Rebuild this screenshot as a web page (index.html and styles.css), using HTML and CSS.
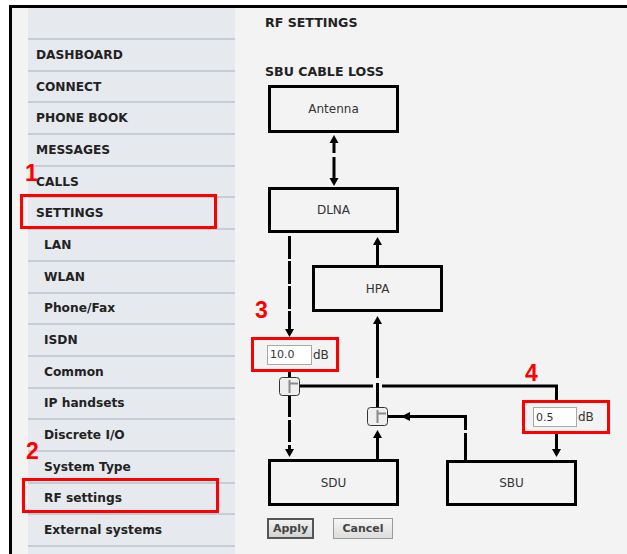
FILE: index.html
```html
<!DOCTYPE html>
<html>
    <head>
        <link rel="stylesheet" href="styles.css">
    </head>
    <body>
        <div class="frame">
            <div class="gutter"></div>
            <nav class="menu">
                <div class="menu-top"></div>
                <div class="item">DASHBOARD</div>
                <div class="item">CONNECT</div>
                <div class="item">PHONE BOOK</div>
                <div class="item">MESSAGES</div>
                <div class="item">CALLS</div>
                <div class="item">SETTINGS</div>
                <div class="item sub">LAN</div>
                <div class="item sub">WLAN</div>
                <div class="item sub">Phone/Fax</div>
                <div class="item sub">ISDN</div>
                <div class="item sub">Common</div>
                <div class="item sub">IP handsets</div>
                <div class="item sub">Discrete I/O</div>
                <div class="item sub">System Type</div>
                <div class="item sub">RF settings</div>
                <div class="item sub">External systems</div>
                <div class="item sub"></div>
            </nav>
            <main class="content">
                <h1>RF SETTINGS</h1>
                <h2>SBU CABLE LOSS</h2>
                <div class="diagram">
                    <svg class="wires" width="350" height="430" viewBox="0 0 350 430">
                        <g stroke="#000" stroke-width="3" fill="none">
                            <!-- antenna <-> dlna -->
                            <path d="M69 62 V73 M69 77 V99"/>
                            <!-- dlna down to loss field -->
                            <path d="M24.5 156 V250" stroke-dasharray="23 2"/>
                            <!-- hpa up to dlna -->
                            <path d="M112.5 164 V185"/>
                            <!-- tee 2 up to hpa -->
                            <path d="M112.5 243 V298 M112.5 303 V327"/>
                            <!-- loss field to tee 1 -->
                            <path d="M24.5 292 V297"/>
                            <!-- tee 1 across to sbu loss -->
                            <path d="M35 306 H108 M117 306 H291.5 V320"/>
                            <!-- sbu loss down to sbu -->
                            <path d="M291.5 354 V370"/>
                            <!-- sbu up and over to tee 2 -->
                            <path d="M200.5 380 V353 M200.5 350 V336.5 H123"/>
                            <!-- tee 2 down to sdu -->
                            <path d="M112.5 357 V379"/>
                            <!-- tee 1 down to sdu -->
                            <path d="M24.5 315 V370" stroke-dasharray="22 3"/>
                        </g>
                        <g fill="#000">
                            <polygon points="69,55 64.5,63 73.5,63"/>
                            <polygon points="69,106 64.5,98 73.5,98"/>
                            <polygon points="24.5,257 20,249 29,249"/>
                            <polygon points="112.5,157 108,165 117,165"/>
                            <polygon points="112.5,236 108,244 117,244"/>
                            <polygon points="291.5,377 287,369 296,369"/>
                            <polygon points="136,336.5 145,332 145,341"/>
                            <polygon points="112.5,350 108,358 117,358"/>
                            <polygon points="24.5,377 20,369 29,369"/>
                        </g>
                        <g class="tee">
                            <rect x="14.5" y="297.5" width="20" height="18" rx="3"/>
                            <path d="M24.5 300 V313 M24.5 303.5 H33"/>
                        </g>
                        <g class="tee">
                            <rect x="102.5" y="327.5" width="20" height="18" rx="3"/>
                            <path d="M112.5 330 V343 M112.5 333.5 H121"/>
                        </g>
                    </svg>
                    <div class="node antenna">Antenna</div>
                    <div class="node dlna">DLNA</div>
                    <div class="node hpa">HPA</div>
                    <div class="node sdu">SDU</div>
                    <div class="node sbu">SBU</div>
                    <div class="loss loss-dlna"><input type="text" value="10.0"><span>dB</span></div>
                    <div class="loss loss-sbu"><input type="text" value="0.5"><span>dB</span></div>
                    <div class="num num-3">3</div>
                    <div class="num num-4">4</div>
                </div>
                <div class="buttons">
                    <button class="apply">Apply</button>
                    <button class="cancel">Cancel</button>
                </div>
            </main>
        </div>
        <div class="mark mark-settings"></div>
        <div class="mark mark-rf"></div>
        <div class="num num-1">1</div>
        <div class="num num-2">2</div>
    </body>
</html>
```
FILE: styles.css
```css
* {
    box-sizing: border-box;
}

body {
    margin: 0;
    background: #ffffff;
    font-family: "DejaVu Sans", Verdana, sans-serif;
    width: 627px;
    height: 554px;
    overflow: hidden;
    position: relative;
}

.frame {
    display: flex;
    margin: 5px 0 0 9px;
    height: 549px;
    border-top: 3px solid #000;
    border-left: 3px solid #000;
    background: #f3f3f3;
}

.gutter {
    width: 16px;
    flex: none;
}

.menu {
    width: 207px;
    flex: none;
    background: #e6e9ee;
}

.menu-top {
    height: 30px;
}

.item {
    height: 31.7px;
    border-top: 2px solid #c6cdd6;
    padding-left: 8px;
    font-weight: bold;
    font-size: 12.2px;
    color: #222;
    display: flex;
    align-items: center;
}

.item.sub {
    padding-left: 16px;
}

.content {
    flex: 1;
    padding-left: 30px;
}

h1, h2 {
    font-size: 12.6px;
    font-weight: bold;
    color: #222;
    line-height: 15px;
    margin: 0;
}

h1 {
    margin-top: 7px;
}

h2 {
    margin-top: 34px;
    margin-bottom: 1px;
}

.diagram {
    position: relative;
    width: 350px;
    height: 426px;
}

.wires {
    position: absolute;
    left: 0;
    top: 0;
    overflow: visible;
}

.tee rect {
    fill: #efefef;
    stroke: #333;
    stroke-width: 1;
}

.tee path {
    stroke: #8a8a8a;
    stroke-width: 2;
    fill: none;
}

.node {
    position: absolute;
    width: 131px;
    border: 3px solid #000;
    display: flex;
    align-items: center;
    justify-content: center;
    font-size: 12px;
    color: #333;
    background: #f3f3f3;
}

.antenna { left: 3px; top: 5px; height: 48px; }
.dlna { left: 3px; top: 107px; height: 46px; }
.hpa { left: 47px; top: 185px; height: 47px; }
.sdu { left: 3px; top: 379px; height: 47px; }
.sbu { left: 181px; top: 380px; height: 46px; }

.loss {
    position: absolute;
    display: flex;
    align-items: center;
    border: 3px solid #ff0000;
    font-size: 12px;
    color: #333;
}

.loss input {
    width: 45px;
    height: 20px;
    border: 1px solid #a8a8a8;
    background: #fff;
    font-family: "DejaVu Sans", Verdana, sans-serif;
    font-size: 11px;
    color: #333;
    padding: 0 2px;
    margin: 0 1px 0 0;
}

.loss-dlna {
    left: -14px;
    top: 257px;
    width: 88px;
    height: 35px;
    padding-left: 13px;
}

.loss-sbu {
    left: 257px;
    top: 320px;
    width: 88px;
    height: 34px;
    padding-left: 8px;
}

.loss-sbu input {
    width: 44px;
}

.num {
    position: absolute;
    font-family: "Liberation Sans", Arial, sans-serif;
    font-weight: bold;
    font-size: 23px;
    line-height: 23px;
    color: #ff0000;
}

.num-1 { left: 25px; top: 162px; }
.num-2 { left: 26px; top: 440px; }
.num-3 { left: -10px; top: 219px; }
.num-4 { left: 260px; top: 282px; }

.mark {
    position: absolute;
    border: 3px solid #ff0000;
    width: 197px;
    height: 35px;
}

.mark-settings { left: 20px; top: 194px; }
.mark-rf { left: 22px; top: 478px; }

.buttons {
    display: flex;
    gap: 19px;
    margin: 12px 0 0 2px;
}

button {
    height: 21px;
    font-family: "DejaVu Sans", Verdana, sans-serif;
    font-weight: bold;
    font-size: 11px;
    color: #444;
    padding: 0;
}

.apply {
    width: 47px;
    border: 2px solid #555;
    background: linear-gradient(#f2f2f2, #d2d2d2);
}

.cancel {
    width: 60px;
    border: 1px solid #9a9a9a;
    background: linear-gradient(#f6f6f6, #dcdcdc);
}
```
